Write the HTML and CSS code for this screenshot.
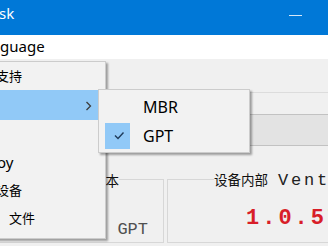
FILE: index.html
```html
<!DOCTYPE html>
<html>
<head>
<meta charset="utf-8">
<link rel="stylesheet" href="styles.css">
</head>
<body>
<div class="window">
  <div class="titlebar">
    <span class="title">sk</span>
    <span class="min"></span>
  </div>
  <div class="menubar"><span class="mitem">guage</span></div>
  <div class="client">
    <div class="device">
      <div class="combo"></div>
    </div>
    <div class="versions">
      <div class="vbox left">
        <div class="gtitle"><span class="glabel">本</span></div>
        <div class="gbody"><span class="style">GPT</span></div>
      </div>
      <div class="vbox right">
        <div class="gtitle"><span class="glabel">设备内部<span class="mono">Ventoy</span> 版本</span></div>
        <div class="gbody"><span class="ver">1.0.57</span></div>
      </div>
    </div>
  </div>

  <div class="menu">
    <div class="item"><span class="t cjk t1">支持</span></div>
    <div class="item hot">
      <svg class="arrow" width="8" height="10" viewBox="0 0 8 10"><path d="M1.5 1 L5.5 5 L1.5 9" fill="none" stroke="#3c3c3c" stroke-width="1.3"/></svg>
    </div>
    <div class="item"></div>
    <div class="item"><span class="t t4">oy</span></div>
    <div class="item"><span class="t cjk t5">设备</span></div>
    <div class="item"><span class="t cjk t6">文件</span></div>
  </div>

  <div class="submenu">
    <div class="sitem"><span class="chk"></span><span class="st">MBR</span></div>
    <div class="sitem"><span class="chk on"><svg width="25" height="26" viewBox="0 0 25 26"><path d="M10 12.5 L13 15.5 L18.5 9.5" fill="none" stroke="#1f3b5a" stroke-width="1.4"/></svg></span><span class="st">GPT</span></div>
  </div>
</div>
</body>
</html>
```

FILE: styles.css
```css
* { box-sizing: border-box; }
html, body { margin: 0; padding: 0; }
body {
  width: 328px;
  height: 246px;
  overflow: hidden;
  background: #f0f0f0;
  font-family: "Noto Sans", "Noto Sans CJK SC", sans-serif;
}
.window {
  position: relative;
  width: 328px;
  height: 246px;
  overflow: hidden;
  background: #f0f0f0;
}
.titlebar {
  height: 35px;
  background: #0078d7;
  display: flex;
  align-items: flex-start;
  justify-content: space-between;
}
.title {
  color: #fff;
  font-size: 15px;
  line-height: 15px;
  margin-top: 6px;
  margin-left: -1px;
}
.min {
  width: 13px;
  height: 1px;
  background: #d6e8f8;
  margin-top: 15px;
  margin-right: 26px;
}
.menubar {
  height: 24px;
  background: #fff;
  display: flex;
  align-items: center;
}
.mitem {
  font-size: 15px;
  color: #000;
  line-height: 20px;
  margin-top: -2px;
}
.client {
  padding-top: 33px;
}
.device {
  border-top: 1px solid #dcdcdc;
  padding-top: 21px;
  margin-left: -20px;
}
.combo {
  height: 32px;
  background: #e3e3e3;
  border: 1px solid #c2c2c2;
  border-right: none;
}

/* version group boxes */
.versions {
  display: flex;
  gap: 3px;
  margin-top: 26px;
  margin-left: -40px;
}
.vbox {
  display: flex;
  flex-direction: column;
}
.vbox.left { flex: 0 0 204px; }
.vbox.right { flex: 0 0 260px; }
.gtitle {
  display: flex;
  align-items: center;
  height: 16px;
  white-space: nowrap;
}
.gtitle::before,
.gtitle::after {
  content: "";
  align-self: flex-end;
  height: 8px;
  border-top: 1px solid #d7d7d7;
}
.gtitle::before { border-left: 1px solid #d7d7d7; }
.gtitle::after { border-right: 1px solid #d7d7d7; }
.left .gtitle::before { flex: 1; }
.left .gtitle::after { flex: 0 0 44px; }
.right .gtitle::before { flex: 0 0 46px; }
.right .gtitle::after { flex: 1; }
.glabel {
  font-family: "Noto Sans CJK SC", sans-serif;
  font-size: 13.5px;
  line-height: 16px;
  color: #111;
}
.mono {
  font-family: "Liberation Mono", monospace;
  font-size: 17px;
  line-height: 16px;
  letter-spacing: 2.8px;
  margin-left: 10px;
  color: #222;
}
.gbody {
  height: 55px;
  border: 1px solid #d7d7d7;
  border-top: none;
  display: flex;
}
.left .gbody {
  justify-content: flex-end;
  align-items: flex-end;
  padding: 0 15px 3px 0;
}
.right .gbody {
  align-items: flex-start;
  padding: 20px 0 0 78px;
}
.style {
  font-family: "Liberation Mono", monospace;
  font-size: 17px;
  line-height: 18px;
  color: #505050;
}
.ver {
  font-family: "Liberation Mono", monospace;
  font-weight: bold;
  font-size: 22px;
  line-height: 22px;
  letter-spacing: 3px;
  color: #d81e28;
}

/* dropdown menu */
.menu {
  position: absolute;
  left: -20px;
  top: 61px;
  width: 126px;
  height: 178px;
  background: #f2f2f2;
  border: 1px solid #cccccc;
  box-shadow: 2px 2px 2px rgba(0,0,0,0.35);
  font-size: 15px;
}
.item {
  height: 28px;
  display: flex;
  align-items: center;
  position: relative;
  margin-right: 3px;
}
.item.hot {
  height: 30px;
  background: #91c9f7;
}
.t { line-height: 20px; color: #000; }
.cjk { font-family: "Noto Sans CJK SC", sans-serif; font-size: 13px; }
.t1 { margin-left: 15px; }
.t4 { margin-left: 16px; }
.t5 { margin-left: 15px; }
.t6 { margin-left: 28px; }
.arrow {
  position: absolute;
  left: 104px;
  top: 11px;
}

.submenu {
  position: absolute;
  left: 98px;
  top: 89px;
  width: 152px;
  height: 64px;
  background: #f2f2f2;
  border: 1px solid #cccccc;
  box-shadow: 2px 2px 2px rgba(0,0,0,0.35);
  padding: 2px 0;
  font-size: 15px;
}
.sitem {
  height: 29px;
  display: flex;
  align-items: center;
}
.chk {
  width: 25px;
  height: 26px;
  margin-left: 6px;
}
.chk.on { background: #91c9f7; }
.chk svg { display: block; }
.st {
  margin-left: 13px;
  font-size: 16px;
  color: #000;
}
```
